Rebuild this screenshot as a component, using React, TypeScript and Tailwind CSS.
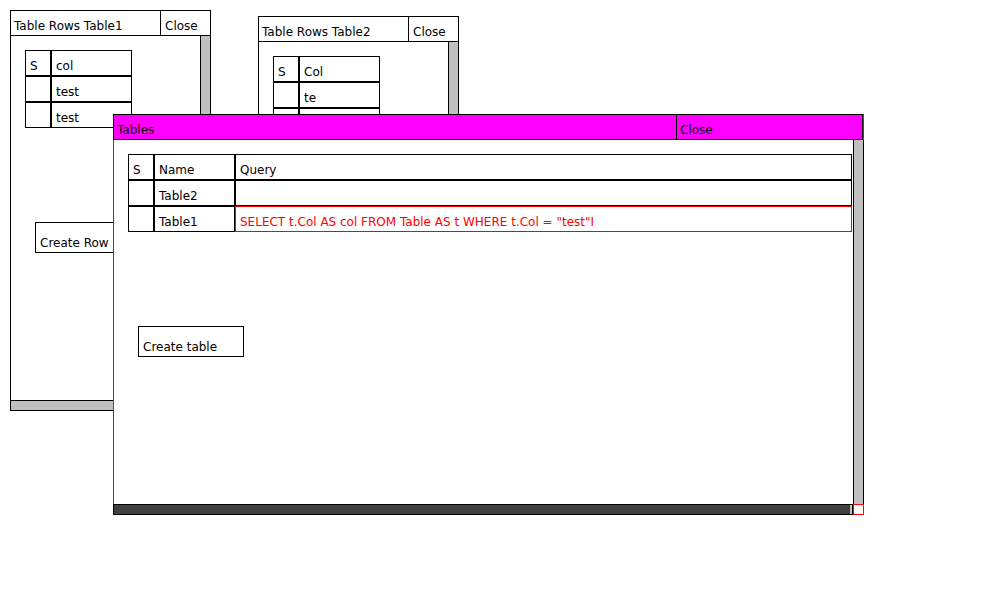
import React from "react";

function Cell({ w, children, red }: { w: string; children?: React.ReactNode; red?: boolean }) {
  return (
    <div
      className={
        (red ? "border-[#ff0000] text-[#ff0000] " : "border-black ") +
        w +
        " h-[26px] shrink-0 overflow-hidden whitespace-nowrap border pl-[4px] pt-[8px] leading-[14px]"
      }
    >
      {children}
    </div>
  );
}

function Button({ w, children }: { w: string; children: React.ReactNode }) {
  return (
    <div className={w + " ml-[10px] mt-[94px] h-[31px] shrink-0 whitespace-nowrap border border-black bg-white pl-[4px] pt-[13px] leading-[14px]"}>
      {children}
    </div>
  );
}

function SmallWindow({
  pos,
  title,
  head,
  rows,
  btn,
}: {
  pos: string;
  title: string;
  head: string;
  rows: string[];
  btn: string;
}) {
  return (
    <div className={pos + " absolute flex h-[401px] w-[201px] flex-col bg-white"}>
      <div className="flex h-[26px] shrink-0 border border-black">
        <div className="flex-1 whitespace-nowrap pl-[3px] pt-[8px] leading-[14px]">{title}</div>
        <div className="w-[50px] border-l border-black pl-[4px] pt-[8px] leading-[14px]">Close</div>
      </div>
      <div className="flex min-h-0 flex-1">
        <div className="flex flex-1 flex-col overflow-hidden border-l border-black pl-[14px] pt-[14px]">
          <div className="flex flex-col">
            <div className="flex">
              <Cell w="w-[26px]">S</Cell>
              <Cell w="w-[81px]">{head}</Cell>
            </div>
            {rows.map((r, i) => (
              <div className="flex" key={i}>
                <Cell w="w-[26px]" />
                <Cell w="w-[81px]">{r}</Cell>
              </div>
            ))}
          </div>
          <Button w="w-[100px]">{btn}</Button>
        </div>
        <div className="w-[11px] border-x border-black bg-[#c0c0c0]" />
      </div>
      <div className="h-[11px] shrink-0 border border-black bg-[#c0c0c0]" />
    </div>
  );
}

export default function App() {
  return (
    <div className="relative h-[600px] w-[1000px] overflow-hidden bg-white font-['DejaVu_Sans',sans-serif] text-[12px] text-black">
      <SmallWindow pos="left-[10px] top-[10px]" title="Table Rows Table1" head="col" rows={["test", "test"]} btn="Create Row" />
      <SmallWindow pos="left-[258px] top-[16px]" title="Table Rows Table2" head="Col" rows={["te", ""]} btn="Create Row" />

      <div className="absolute left-[113px] top-[114px] flex h-[401px] w-[751px] flex-col bg-white">
        <div className="flex h-[26px] shrink-0">
          <div className="flex flex-1 border border-black bg-[#ff00ff]">
            <div className="flex-1 pl-[3px] pt-[8px] leading-[14px]">Tables</div>
            <div className="w-[186px] border-l border-black pl-[3px] pt-[8px] leading-[14px]">Close</div>
          </div>
          <div className="w-px bg-[#ff0000]" />
        </div>
        <div className="flex min-h-0 flex-1">
          <div className="flex flex-1 flex-col overflow-hidden border-l border-[#ff0000] pl-[14px] pt-[14px]">
            <div className="flex flex-col">
              <div className="flex">
                <Cell w="w-[26px]">S</Cell>
                <Cell w="w-[81px]">Name</Cell>
                <Cell w="w-[617px]">Query</Cell>
              </div>
              <div className="flex">
                <Cell w="w-[26px]" />
                <Cell w="w-[81px]">Table2</Cell>
                <Cell w="w-[617px]" />
              </div>
              <div className="flex">
                <Cell w="w-[26px]" />
                <Cell w="w-[81px]">Table1</Cell>
                <Cell w="w-[617px]" red>
                  SELECT t.Col AS col FROM Table AS t WHERE t.Col = "test"I
                </Cell>
              </div>
            </div>
            <Button w="w-[106px]">Create table</Button>
          </div>
          <div className="w-[11px] border-x border-black bg-[#c0c0c0]" />
        </div>
        <div className="flex h-[11px] shrink-0">
          <div className="flex flex-1 border border-black bg-[#c0c0c0] pr-[2px]">
            <div className="flex-1 bg-[#404040]" />
          </div>
          <div className="w-[11px] border border-[#ff0000] bg-white" />
        </div>
      </div>
    </div>
  );
}
